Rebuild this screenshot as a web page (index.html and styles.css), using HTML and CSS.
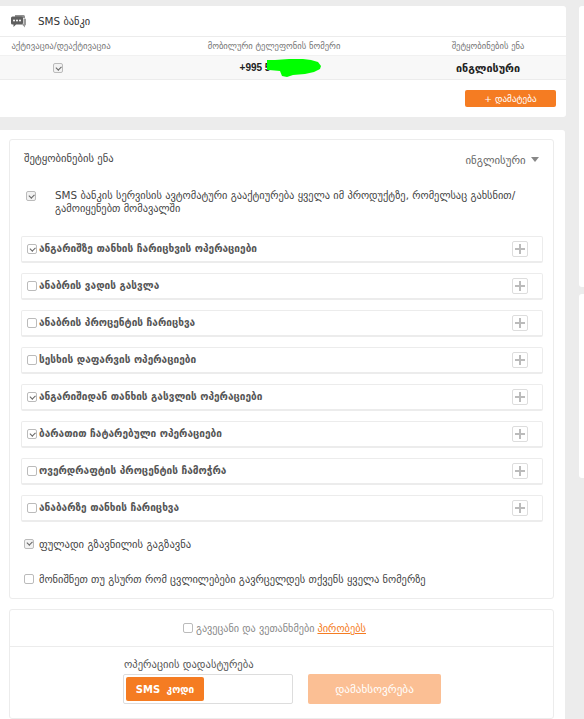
FILE: index.html
```html
<!DOCTYPE html>
<html lang="ka">
<head>
<meta charset="utf-8">
<title>SMS ბანკი</title>
<link rel="stylesheet" href="styles.css">
</head>
<body>
<div class="page">
  <main class="main">
    <section class="card top-card">
      <header class="card-head">
        <svg class="chat-icon" width="15" height="13" viewBox="0 0 15 13"><path d="M4 0h8.500A1.500 1.500 0 0 1 14 1.500V3H4z" fill="#8f8f8f"/><path d="M1.500 1.500h9A1.500 1.500 0 0 1 12 3v5a1.500 1.500 0 0 1-1.500 1.500H5L2.500 12V9.500h-1A1.500 1.500 0 0 1 0 8V3a1.500 1.500 0 0 1 1.500-1.500z" fill="#5f5f5f"/><path d="M12.500 3.500H14a1 1 0 0 1 1 1v5a1 1 0 0 1-1 1v2l-2.500-2.500H9l3.500-1z" fill="#9a9a9a"/><circle cx="3" cy="5.500" r="1" fill="#fff"/><circle cx="6" cy="5.500" r="1" fill="#fff"/><circle cx="9" cy="5.500" r="1" fill="#fff"/></svg>
        <h1 class="title">SMS ბანკი</h1>
      </header>
      <div class="table-row labels">
        <span class="first-label">აქტივაცია/დეაქტივაცია</span>
        <span>მობილური ტელეფონის ნომერი</span>
        <span>შეტყობინების ენა</span>
      </div>
      <div class="table-row values">
        <span class="value-check"><i class="check checked muted"></i></span>
        <span class="phone">+995 5<svg class="blot" width="54" height="18" viewBox="0 0 54 18"><path d="M0 1 8 1 22 0 36 0 44 1 51 3 54 7 53 10 47 13 38 15 26 16 20 18 15 17 13 12 2 11 0 11z" fill="#00ff00"/></svg></span>
        <span class="lang-value">ინგლისური</span>
      </div>
      <div class="add-line"><button class="btn add">+ დამატება</button></div>
    </section>

    <section class="card settings-card">
      <div class="panel settings">
        <div class="lang-line">
          <span>შეტყობინების ენა</span>
          <span class="lang-select">ინგლისური <i class="caret"></i></span>
        </div>
        <div class="auto-line">
          <i class="check checked muted"></i>
          <p>SMS ბანკის სერვისის ავტომატური გააქტიურება ყველა იმ პროდუქტზე, რომელსაც გახსნით/<br>გამოიყენებთ მომავალში</p>
        </div>
        <ul class="options">
          <li class="option"><i class="check checked"></i><b>ანგარიშზე თანხის ჩარიცხვის ოპერაციები</b><span class="plus"></span></li>
          <li class="option"><i class="check"></i><b>ანაბრის ვადის გასვლა</b><span class="plus"></span></li>
          <li class="option"><i class="check"></i><b>ანაბრის პროცენტის ჩარიცხვა</b><span class="plus"></span></li>
          <li class="option"><i class="check"></i><b>სესხის დაფარვის ოპერაციები</b><span class="plus"></span></li>
          <li class="option"><i class="check checked"></i><b>ანგარიშიდან თანხის გასვლის ოპერაციები</b><span class="plus"></span></li>
          <li class="option"><i class="check checked"></i><b>ბარათით ჩატარებული ოპერაციები</b><span class="plus"></span></li>
          <li class="option"><i class="check"></i><b>ოვერდრაფტის პროცენტის ჩამოჭრა</b><span class="plus"></span></li>
          <li class="option"><i class="check"></i><b>ანაბარზე თანხის ჩარიცხვა</b><span class="plus"></span></li>
        </ul>
        <label class="plain first"><i class="check checked muted"></i>ფულადი გზავნილის გაგზავნა</label>
        <label class="plain"><i class="check"></i>მონიშნეთ თუ გსურთ რომ ცვლილებები გავრცელდეს თქვენს ყველა ნომერზე</label>
      </div>
      <div class="panel confirm">
        <div class="terms"><i class="check"></i><span>გავეცანი და ვეთანხმები</span><a href="#">პირობებს</a></div>
        <div class="confirm-body">
          <div class="code-field">
            <span class="code-label">ოპერაციის დადასტურება</span>
            <div class="code-input"><span class="code-tag">SMS კოდი</span></div>
          </div>
          <button class="btn save">დამახსოვრება</button>
        </div>
      </div>
    </section>
  </main>
  <aside class="side">
    <div class="side-card one"></div>
    <div class="side-card two"></div>
  </aside>
</div>
</body>
</html>
```
FILE: styles.css
```css
* { box-sizing: border-box; }
html, body { margin: 0; height: 100%; overflow: hidden; }
body {
  background: #ececec;
  font-family: "DejaVu Sans", "Noto Sans", sans-serif;
  font-size: 10px;
  color: #444;
}
.page { display: flex; padding-top: 6px; height: 719px; overflow: hidden; }
.main { width: 566px; flex: none; }
.side { margin-left: 13px; flex: 1; display: flex; flex-direction: column; gap: 7px; }
.side-card { background: #fff; border-radius: 3px 0 0 3px; }
.side-card.one { height: 281px; }
.side-card.two { height: 184px; }
.card { background: #fff; border-radius: 0 3px 3px 0; }
.top-card { height: 111px; }
.card-head { height: 31px; display: flex; align-items: center; padding-left: 11px; border-bottom: 1px solid #ececec; }
.chat-icon { flex: none; }
.title { margin: 0 0 0 12px; font-size: 10.400px; font-weight: 400; color: #333; }
.table-row { display: grid; grid-template-columns: 115px 318px 110px; text-align: center; align-items: center; }
.labels { height: 19px; font-size: 8.600px; color: #777; border-bottom: 1px solid #f1f1f1; }
.first-label { font-size: 8.800px; padding-left: 7px; white-space: nowrap; }
.values { height: 24px; background: #f8f8f8; border-bottom: 1px solid #ececec; font-size: 10px; font-weight: 700; color: #222; }
.value-check { display: flex; justify-content: center; padding-top: 1px; }
.phone { font-family: "Liberation Sans", sans-serif; display: flex; justify-content: center; align-items: center; padding-left: 13px; height: 23px; font-size: 10px; }
.blot { margin-left: -3px; margin-top: 1px; }
.lang-value { font-family: "DejaVu Sans", sans-serif; font-size: 10.800px; padding-top: 1px; }
.add-line { display: flex; justify-content: flex-end; padding: 10px 10px 0 0; }
.btn { border: 0; border-radius: 2px; background: #f57c22; color: #fff; font: inherit; padding: 0; }
.add { width: 91px; height: 17px; font-size: 9.200px; }
.settings-card { margin-top: 13px; height: 600px; width: 565px; padding: 9px 11px 0 9px; }
.panel { border: 1px solid #ececec; border-radius: 3px; width: 545px; }
.settings { height: 460px; padding: 0 10px 0 11px; }
.lang-line { display: flex; justify-content: space-between; height: 38px; padding: 12px 4px 0 3px; color: #444; font-size: 10.600px; }
.lang-select { font-size: 10.800px; color: #666; margin-top: 2px; }
.caret { display: inline-block; width: 0; height: 0; border: 4px solid transparent; border-top: 5px solid #888; border-bottom: 0; margin-left: 2px; vertical-align: 2px; }
.auto-line { display: flex; padding: 11px 0 0 5px; height: 58px; }
.auto-line .check { margin-top: 2px; margin-right: 19px; }
.auto-line p { margin: 0; font-size: 10.400px; line-height: 13px; color: #444; }
.check { flex: none; display: inline-block; position: relative; width: 10px; height: 10px; border: 1px solid #bbb; border-radius: 2px; background: #fff; }
.check.checked::after { content: ""; position: absolute; left: 2px; top: 0.500px; width: 4px; height: 2.500px; border-left: 1.500px solid #666; border-bottom: 1.500px solid #666; transform: rotate(-45deg) translate(-0.500px, 0.500px); }
.check.muted { background: #f2f2f2; }
.options { list-style: none; margin: 0; padding: 0; display: flex; flex-direction: column; gap: 10px; }
.option { display: flex; align-items: center; height: 27px; border: 1px solid #ececec; border-bottom-width: 2px; border-radius: 2px; padding: 0 10px 0 5px; }
.option b { margin-left: 2px; padding-bottom: 2px; font-size: 10.100px; font-weight: 700; color: #555; flex: 1; }
.plus { position: relative; flex: none; width: 16px; height: 16px; border: 1px solid #ddd; border-radius: 2px; margin-right: 4px; }
.plus::before, .plus::after { content: ""; position: absolute; background: #bbb; }
.plus::before { left: 2px; right: 2px; top: 6px; height: 2px; }
.plus::after { top: 2px; bottom: 2px; left: 6px; width: 2px; }
.plain { display: flex; align-items: center; gap: 5px; height: 11px; margin: 24px 0 0 3px; font-size: 10.400px; color: #444; }
.plain.first { margin-top: 16px; font-size: 10.600px; }
.confirm { margin-top: 10px; height: 110px; }
.terms { height: 37px; display: flex; align-items: center; justify-content: center; gap: 3px; border-bottom: 1px solid #ececec; font-size: 10.200px; color: #888; padding-right: 14px; }
.terms a { color: #f57c22; font-size: 10.400px; }
.confirm-body { display: flex; align-items: flex-end; padding: 11px 0 0 113px; }
.code-field { width: 170px; }
.code-label { display: block; font-size: 10.600px; color: #555; margin-bottom: 4px; padding-left: 1px; line-height: 12px; }
.code-input { height: 30px; border: 1px solid #ddd; border-radius: 2px; padding: 2px; width: 170px; }
.code-tag { display: flex; align-items: center; justify-content: center; width: 78px; height: 24px; background: #f57c22; color: #fff; border-radius: 2px; font-size: 10px; font-weight: 700; word-spacing: 3px; }
.save { width: 133px; height: 30px; margin-left: 15px; background: #fbbf94; font-size: 11.200px; }
```
